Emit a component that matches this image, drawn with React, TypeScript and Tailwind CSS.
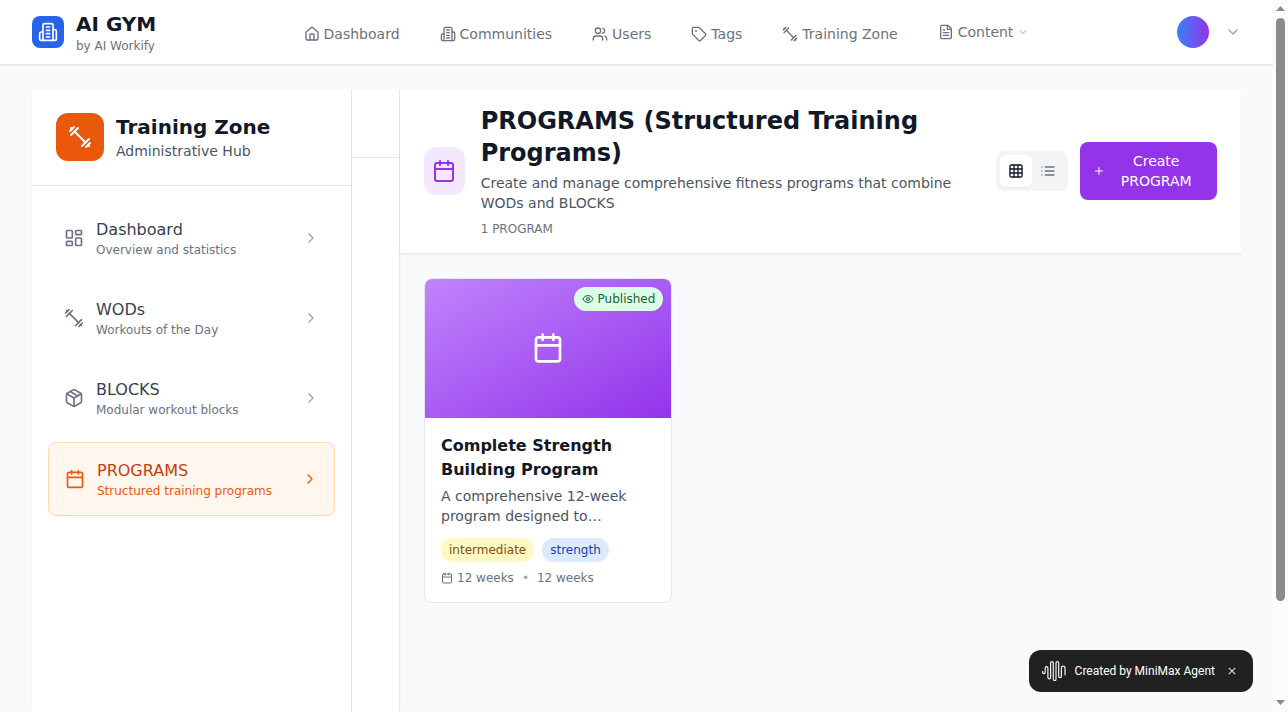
import {
  Calendar, ChevronDown, ChevronRight, Eye, FileText, Grid3x3, Home,
  LayoutDashboard, Package, Plus, Tag, Users,
} from 'lucide-react';
import type { ComponentType } from 'react';

type IconType = ComponentType<{ className?: string }>;

function Dumbbell({ className }: { className?: string }) {
  return (
    <svg viewBox="0 0 24 24" fill="none" stroke="currentColor" strokeWidth="2" strokeLinecap="round" strokeLinejoin="round" className={className}>
      <path d="m6.5 6.5 11 11" />
      <path d="m21 21-1-1" />
      <path d="m3 3 1 1" />
      <path d="m18 22 4-4" />
      <path d="m2 6 4-4" />
      <path d="m3 10 7-7" />
      <path d="m14 21 7-7" />
    </svg>
  );
}

function Building({ className }: { className?: string }) {
  return (
    <svg viewBox="0 0 24 24" fill="none" stroke="currentColor" strokeWidth="2" strokeLinecap="round" strokeLinejoin="round" className={className}>
      <path d="M6 22V4a2 2 0 0 1 2-2h8a2 2 0 0 1 2 2v18Z" />
      <path d="M6 12H4a2 2 0 0 0-2 2v6a2 2 0 0 0 2 2h2" />
      <path d="M18 9h2a2 2 0 0 1 2 2v9a2 2 0 0 1-2 2h-2" />
      <path d="M10 6h4" />
      <path d="M10 10h4" />
      <path d="M10 14h4" />
      <path d="M10 18h4" />
    </svg>
  );
}

function ListIcon({ className }: { className?: string }) {
  return (
    <svg viewBox="0 0 24 24" fill="none" stroke="currentColor" strokeWidth="2" strokeLinecap="round" strokeLinejoin="round" className={className}>
      <path d="M8 6h13M8 12h13M8 18h13M3 6h.01M3 12h.01M3 18h.01" />
    </svg>
  );
}

function WaveLogo() {
  return (
    <svg width="24" height="20" viewBox="0 0 24 20" fill="none" stroke="#f2f2f2" strokeWidth="1.2" strokeLinecap="round" strokeLinejoin="round">
      <path d="M.6 10.4v.9a1.3 1.3 0 0 0 2.6 0V7a1.35 1.35 0 0 1 2.7 0v9.6a1.35 1.35 0 0 0 2.7 0V2a1.35 1.35 0 0 1 2.7 0v12.5" />
      <path d="M11.3 14.5v3.7a1.35 1.35 0 0 0 2.7 0V2a1.35 1.35 0 0 1 2.7 0v13.2a1.35 1.35 0 0 0 2.7 0V7a1.8 1.8 0 0 1 3.6 0v6.8" />
    </svg>
  );
}

const navItems: { label: string; icon: IconType }[] = [
  { label: 'Dashboard', icon: Home },
  { label: 'Communities', icon: Building },
  { label: 'Users', icon: Users },
  { label: 'Tags', icon: Tag },
  { label: 'Training Zone', icon: Dumbbell },
];

const sections: { label: string; note: string; icon: IconType; active?: boolean }[] = [
  { label: 'Dashboard', note: 'Overview and statistics', icon: LayoutDashboard },
  { label: 'WODs', note: 'Workouts of the Day', icon: Dumbbell },
  { label: 'BLOCKS', note: 'Modular workout blocks', icon: Package },
  { label: 'PROGRAMS', note: 'Structured training programs', icon: Calendar, active: true },
];

function TopBar() {
  return (
    <header className="relative flex h-[65px] shrink-0 items-center justify-between border-b border-[#e5e7eb] bg-white px-8 shadow-[0_1px_2px_0_rgba(0,0,0,0.05)]">
      <div className="flex w-[271.6px] items-center gap-3">
        <div className="flex size-8 items-center justify-center rounded-lg bg-[#2563eb]">
          <Building className="size-5 text-white" />
        </div>
        <div>
          <h1 className="text-xl leading-7 font-bold text-[#111827]">AI GYM</h1>
          <p className="text-xs leading-4 text-[#6b7280]">by AI Workify</p>
        </div>
      </div>
      <nav className="flex flex-1 items-center gap-10 text-sm font-medium text-[#6b7280]">
        {navItems.map(({ label, icon: Icon }) => (
          <a key={label} className="flex items-center gap-1 pt-1 whitespace-nowrap">
            <Icon className="size-4" />
            {label}
          </a>
        ))}
        <button className="flex items-center gap-1 whitespace-nowrap">
          <FileText className="size-4" />
          Content
          <ChevronDown className="size-3 text-[#9ca3af]" />
        </button>
      </nav>
      <div className="flex items-center gap-4">
        <div className="size-8 rounded-full bg-linear-[to_right,#3b82f6,#9333ea]" />
        <ChevronDown className="size-4 text-[#9ca3af]" />
      </div>
    </header>
  );
}

function Sidebar() {
  return (
    <aside className="w-80 shrink-0 border-r border-[#e5e7eb] bg-white shadow-[0_1px_2px_0_rgba(0,0,0,0.05)]">
      <div className="flex h-[97px] items-center gap-3 border-b border-[#e5e7eb] px-6">
        <div className="flex size-12 items-center justify-center rounded-xl bg-[#ea580c]">
          <Dumbbell className="size-6 text-white" />
        </div>
        <div>
          <h2 className="text-xl leading-7 font-bold text-[#111827]">Training Zone</h2>
          <p className="text-sm leading-5 text-[#4b5563]">Administrative Hub</p>
        </div>
      </div>
      <nav className="flex flex-col gap-2 p-4">
        {sections.map(({ label, note, icon: Icon, active }) => (
          <a key={label} className={active ? 'flex items-center gap-3 rounded-lg border border-[#fed7aa] bg-[#fff7ed] p-4' : 'flex items-center gap-3 rounded-lg p-4'}>
            <Icon className={active ? 'size-5 text-[#ea580c]' : 'size-5 text-[#6b7280]'} />
            <div className="flex-1">
              <div className={active ? 'text-base leading-6 font-medium text-[#c2410c]' : 'text-base leading-6 font-medium text-[#374151]'}>{label}</div>
              <div className={active ? 'text-xs leading-4 text-[#ea580c]' : 'text-xs leading-4 text-[#6b7280]'}>{note}</div>
            </div>
            <ChevronRight className={active ? 'size-4 text-[#ea580c]' : 'size-4 text-[#9ca3af]'} />
          </a>
        ))}
      </nav>
    </aside>
  );
}

function ProgramCard() {
  return (
    <article className="overflow-hidden rounded-lg border border-[#e5e7eb] bg-white">
      <div className="relative flex aspect-video items-center justify-center bg-linear-[to_bottom_right,#c084fc,#9333ea]">
        <Calendar className="size-8 text-white" />
        <span className="absolute top-2 right-2 flex items-center gap-1 rounded-full bg-[#dcfce7] px-2 py-1 text-xs leading-4 font-medium text-[#166534]">
          <Eye className="size-3" />
          Published
        </span>
      </div>
      <div className="p-4">
        <h3 className="text-base leading-6 font-semibold text-[#111827]">Complete Strength Building Program</h3>
        <p className="mt-1 line-clamp-2 text-sm leading-5 text-[#4b5563]">A comprehensive 12-week program designed to…</p>
        <div className="mt-3 flex gap-2 text-xs leading-4">
          <span className="rounded-full bg-[#fef9c3] px-2 py-1 text-[#854d0e]">intermediate</span>
          <span className="rounded-full bg-[#dbeafe] px-2 py-1 text-[#1e40af]">strength</span>
        </div>
        <div className="mt-2 flex items-center text-xs leading-4 text-[#6b7280]">
          <Calendar className="mr-1 size-3" />
          <span>12 weeks</span>
          <span className="mx-2 text-[#9ca3af]">•</span>
          <span>12 weeks</span>
        </div>
      </div>
    </article>
  );
}

function Programs() {
  return (
    <main className="min-w-0 flex-1">
      <div className="flex h-[165px] items-center border-b border-[#e5e7eb] bg-white px-6 shadow-[0_1px_2px_0_rgba(0,0,0,0.05)]">
        <div className="flex h-12 w-[40.7px] shrink-0 items-center justify-center rounded-xl bg-[#f3e8ff]">
          <Calendar className="size-6 shrink-0 text-[#9333ea]" />
        </div>
        <div className="ml-4 w-[499.3px]">
          <h1 className="text-2xl leading-8 font-bold text-[#111827]">PROGRAMS (Structured Training Programs)</h1>
          <p className="mt-1 text-sm leading-5 text-[#4b5563]">Create and manage comprehensive fitness programs that combine WODs and BLOCKS</p>
          <p className="mt-2 text-xs leading-4 text-[#6b7280]">1 PROGRAM</p>
        </div>
        <div className="ml-4 flex shrink-0 items-center gap-3">
          <div className="flex rounded-lg bg-[#f3f4f6] p-1">
            <button className="flex size-8 items-center justify-center rounded-md bg-white text-[#111827] shadow-[0_1px_2px_0_rgba(0,0,0,0.05)]">
              <Grid3x3 className="size-4" />
            </button>
            <button className="flex size-8 items-center justify-center text-[#6b7280]">
              <ListIcon className="size-4" />
            </button>
          </div>
          <button className="flex h-[58px] w-[137px] items-center rounded-lg bg-[#9333ea] pl-[12.7px] text-sm leading-5 font-medium text-white">
            <Plus className="size-3 shrink-0" />
            <span className="ml-4 w-[71px] text-center">Create PROGRAM</span>
          </button>
        </div>
      </div>
      <div className="grid grid-cols-3 gap-6 p-6">
        <ProgramCard />
      </div>
    </main>
  );
}

function AgentToast() {
  return (
    <div className="absolute right-[35px] bottom-5 flex h-[42px] w-56 items-center rounded-xl bg-[#212121] pl-[13px] font-[Roboto,sans-serif] text-xs font-normal text-white">
      <WaveLogo />
      <span className="ml-[8.6px] w-[140.4px] whitespace-nowrap">Created by MiniMax Agent</span>
      <svg viewBox="0 0 8 8" className="ml-[13px] size-2" stroke="#d4d4d4" strokeWidth="1.2">
        <path d="M.8.8l6.4 6.4M7.2.8.8 7.2" />
      </svg>
    </div>
  );
}

function Scrollbar() {
  return (
    <div className="flex w-[15px] shrink-0 flex-col items-center bg-[#fcfcfc]">
      <svg width="15" height="18" viewBox="0 0 15 18" fill="#8b8b8b">
        <path d="M7.5 6 12 11H3z" />
      </svg>
      <div className="h-[583px] w-[9px] rounded-full bg-[#8b8b8b]" />
      <svg width="15" height="18" viewBox="0 0 15 18" fill="#8b8b8b" className="mt-auto">
        <path d="M3 6h9L7.5 11z" />
      </svg>
    </div>
  );
}

export default function App() {
  return (
    <div className="relative flex h-[712px] w-[1288px] overflow-hidden bg-[#f9fafb] font-['DejaVu_Sans',sans-serif]">
      <div className="flex min-w-0 flex-1 flex-col">
        <TopBar />
        <div className="flex flex-1 px-8 pt-6">
          <Sidebar />
          <div className="w-12 shrink-0 border-r border-[#e5e7eb] bg-white shadow-[0_1px_2px_0_rgba(0,0,0,0.05)]">
            <div className="h-[69px] border-b border-[#e5e7eb]" />
          </div>
          <Programs />
        </div>
      </div>
      <Scrollbar />
      <AgentToast />
    </div>
  );
}
